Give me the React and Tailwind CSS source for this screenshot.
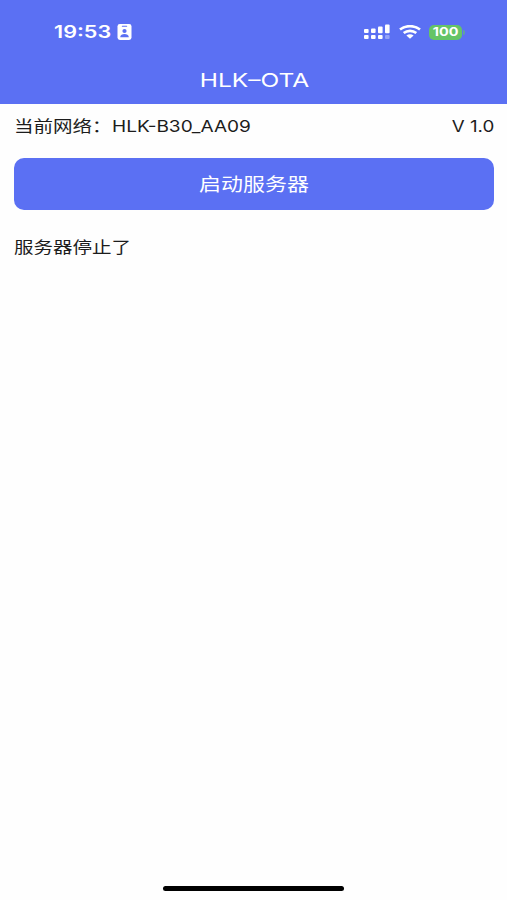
import { useState } from 'react'

function SignalIcon() {
  return (
    <svg width="26" height="16" viewBox="0 0 26 16" fill="#fff">
      <rect x="0" y="5" width="4.6" height="4" rx="1" />
      <rect x="7" y="4.4" width="4.6" height="4.6" rx="1" />
      <rect x="14" y="2.4" width="4.6" height="6.8" rx="1" />
      <rect x="21" y="0.4" width="4.6" height="8.8" rx="1" />
      <rect x="0" y="11" width="4.6" height="4" rx="1" />
      <rect x="7" y="11" width="4.6" height="4" rx="1" />
      <rect x="14" y="11" width="4.6" height="4" rx="1" />
      <rect x="21" y="11" width="4.6" height="4" rx="1" opacity="0.35" />
    </svg>
  )
}

function WifiIcon() {
  return (
    <svg width="22" height="14" viewBox="0 0 22 14" fill="none" stroke="#fff" strokeWidth="2.6">
      <path d="M1 4.6C6.6 0 15.4 0 21 4.6" />
      <path d="M4.7 8.1C8.4 5.1 13.6 5.1 17.3 8.1" />
      <path d="M7.4 10.6C9.6 8.9 12.4 8.9 14.6 10.6L11 13.8Z" fill="#fff" stroke="none" />
    </svg>
  )
}

function ContactIcon() {
  return (
    <svg width="15" height="16" viewBox="0 0 15 16">
      <rect x="0.5" y="0" width="14" height="16" rx="2.4" fill="#fff" />
      <rect x="4.8" y="1.7" width="5.4" height="1.1" rx="0.5" fill="#5b70f3" />
      <circle cx="7.5" cy="7" r="2.1" fill="#5b70f3" />
      <path d="M3.2 13.2C3.2 8.9 11.8 8.9 11.8 13.2Z" fill="#5b70f3" />
    </svg>
  )
}

function StatusBar() {
  return (
    <div className="flex h-16 items-center justify-between pr-[42px] pl-[54px]">
      <div className="flex items-center">
        <div className="w-[63px] pt-[2px] text-[17px] font-semibold">
          <span className="inline-block origin-left scale-x-[1.27]">19:53</span>
        </div>
        <ContactIcon />
      </div>
      <div className="flex items-center">
        <SignalIcon />
        <div className="ml-[9px]">
          <WifiIcon />
        </div>
        <div className="ml-2 flex h-[15px] w-[33px] items-center justify-center rounded-[5px] bg-[#65c466] text-[12px] font-bold">
          <span className="inline-block scale-x-[1.2]">100</span>
        </div>
        <div className="ml-px h-[5px] w-[2px] rounded-r-full bg-[#65c466]/60"></div>
      </div>
    </div>
  )
}

export default function App() {
  const [running, setRunning] = useState(false)

  return (
    <div className="flex h-[900px] w-[507px] flex-col overflow-hidden bg-[#fefefe] font-['Inter','Noto_Sans_CJK_SC',sans-serif] text-[#1c1c1c]">
      <header className="h-[104px] bg-[#5b70f3] text-white">
        <StatusBar />
        <h1 className="pl-px text-center text-[19px] leading-[33px]">
          <span className="inline-block scale-x-[1.29]">HLK–OTA</span>
        </h1>
      </header>

      <main className="flex-1 pr-[13px] pl-[14px]">
        <div className="flex h-[54px] items-center justify-between pb-[10px] text-base">
          <div className="flex">
            <span className="w-[98px]">
              <span className="inline-block origin-left scale-x-[1.22] whitespace-nowrap">当前网络：</span>
            </span>
            <span className="inline-block origin-left scale-x-[1.19]">HLK-B30_AA09</span>
          </div>
          <span className="inline-block origin-right scale-x-[1.17]">V 1.0</span>
        </div>

        <button
          onClick={() => setRunning(!running)}
          className="flex h-[52px] w-full items-center justify-center rounded-[10px] bg-[#5b70f3] pt-[2px] text-lg text-white"
        >
          <span className="inline-block scale-x-[1.22]">{running ? '停止服务器' : '启动服务器'}</span>
        </button>

        <p className="mt-[25px] text-base">
          <span className="inline-block origin-left scale-x-[1.22]">
            {running ? '服务器启动了' : '服务器停止了'}
          </span>
        </p>
      </main>

      <div className="mx-auto mb-[9px] h-[5px] w-[181px] rounded-full bg-black"></div>
    </div>
  )
}
